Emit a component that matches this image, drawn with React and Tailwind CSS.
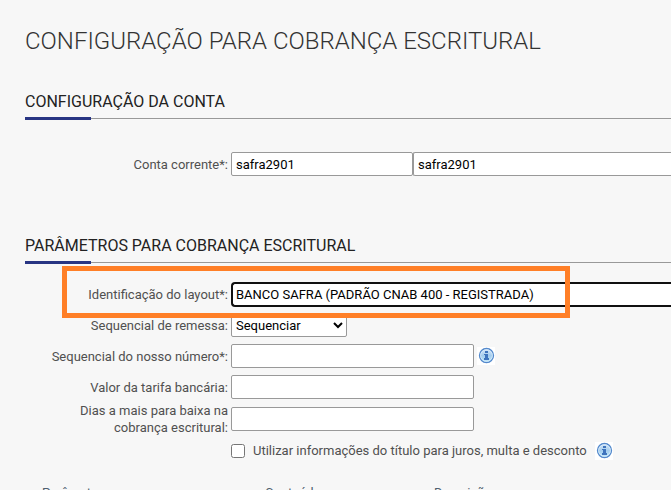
import React, { useState } from 'react';

const fieldClass =
  'h-6 rounded-xs border border-[#999999] bg-white px-1 text-[13px] text-black focus:outline-none';

const InfoIcon = () => (
  <svg viewBox="0 0 18 18" className="h-[18px] w-[18px] bg-white" aria-hidden="true">
    <defs>
      <linearGradient id="info-fill" x1="0" y1="0" x2="0" y2="1">
        <stop offset="0" stopColor="#dbe9f8" />
        <stop offset="0.5" stopColor="#a5cdee" />
        <stop offset="1" stopColor="#bdeafa" />
      </linearGradient>
    </defs>
    <circle cx="9.5" cy="8.5" r="7" fill="url(#info-fill)" stroke="#5489cc" strokeWidth="1.3" />
    <circle cx="9.5" cy="8.5" r="5.9" fill="none" stroke="#dcedfb" strokeWidth="0.8" />
    <path d="M8 4h3v2H8z M7 7h4v4h1v2H7v-2h1V8H7z" fill="#3f74bd" />
  </svg>
);

const SectionTitle = ({ children }) => (
  <div className="ml-[25px] border-b border-[#999999]">
    <h2 className="h-[27px] text-base leading-6 text-[#222222]">{children}</h2>
    <div className="-mb-0.5 h-[3px] w-[66px] bg-[#283583]" />
  </div>
);

const FormRow = ({ label, htmlFor, children }) => (
  <div className="flex items-center gap-[3px] pl-[25px]">
    <label htmlFor={htmlFor} className="w-[203px] shrink-0 text-right leading-[17px]">
      {`${label}:`}
    </label>
    {children}
  </div>
);

const InfoButton = ({ title }) => (
  <button type="button" aria-label={title} className="shrink-0">
    <InfoIcon />
  </button>
);

const App = () => {
  const [account, setAccount] = useState('safra2901');
  const [accountName, setAccountName] = useState('safra2901');
  const [useTitleInfo, setUseTitleInfo] = useState(false);

  return (
    <main className="h-screen overflow-hidden bg-[#f7f7f7] font-['Roboto',sans-serif] text-[13px] text-[#505050]">
      <h1 className="pt-[25px] pl-[25px] text-2xl leading-8 font-light text-[#333333]">
        CONFIGURAÇÃO PARA COBRANÇA ESCRITURAL
      </h1>

      <form>
        <section className="pt-[33px]">
          <SectionTitle>CONFIGURAÇÃO DA CONTA</SectionTitle>
          <div className="pt-[33px]">
            <FormRow label="Conta corrente*" htmlFor="account">
              <div className="flex min-w-0 flex-1">
                <input
                  id="account"
                  type="text"
                  className={`${fieldClass} w-[182px]`}
                  value={account}
                  onChange={(e) => setAccount(e.target.value)}
                />
                <input
                  type="text"
                  aria-label="Conta corrente"
                  className={`${fieldClass} min-w-0 flex-1 rounded-r-none border-r-0`}
                  value={accountName}
                  onChange={(e) => setAccountName(e.target.value)}
                />
              </div>
            </FormRow>
          </div>
        </section>

        <section className="pt-[58px]">
          <SectionTitle>PARÂMETROS PARA COBRANÇA ESCRITURAL</SectionTitle>
          <div className="flex flex-col gap-[7px] pt-[19px]">
            <div className="relative -mb-px">
              <FormRow label="Identificação do layout*" htmlFor="layout">
                <select
                  id="layout"
                  className="h-[25px] min-w-0 flex-1 appearance-none rounded-l-sm border-2 border-r-0 border-[#101010] bg-white px-[3px] text-[13px] text-black outline-none"
                >
                  <option>BANCO SAFRA (PADRÃO CNAB 400 - REGISTRADA)</option>
                </select>
              </FormRow>
              {/* highlight around the layout field */}
              <div className="pointer-events-none absolute -top-4 left-[62px] z-10 h-[52px] w-[508px] border-5 border-[#ff7f27]" />
            </div>

            <FormRow label="Sequencial de remessa" htmlFor="sequence">
              <select
                id="sequence"
                className="h-6 w-[116px] rounded-xs border border-[#999999] bg-white text-[13px] text-black"
              >
                <option>Sequenciar</option>
              </select>
            </FormRow>

            <FormRow label="Sequencial do nosso número*" htmlFor="number">
              <input id="number" type="text" className={`${fieldClass} w-[243px]`} />
              <InfoButton title="Sequencial do nosso número" />
            </FormRow>

            <FormRow label="Valor da tarifa bancária" htmlFor="fee">
              <input id="fee" type="text" className={`${fieldClass} w-[243px]`} />
            </FormRow>

            <div className="-mt-1">
              <FormRow label="Dias a mais para baixa na cobrança escritural" htmlFor="days">
                <input id="days" type="text" className={`${fieldClass} w-[243px]`} />
              </FormRow>
            </div>
          </div>

          <div className="flex items-center gap-2 pt-[5px] pl-[231px]">
            <label className="flex items-center gap-2">
              <input
                type="checkbox"
                className="h-3.5 w-3.5"
                checked={useTitleInfo}
                onChange={(e) => setUseTitleInfo(e.target.checked)}
              />
              Utilizar informações do título para juros, multa e desconto
            </label>
            <InfoButton title="Utilizar informações do título" />
          </div>
        </section>

        <table className="mt-[22px] ml-[42px] w-[650px] table-fixed text-left text-[#4f5f6f]">
          <thead>
            <tr>
              <th className="w-[223px] font-normal">Parâmetro</th>
              <th className="w-[169px] font-normal">Conteúdo</th>
              <th className="font-normal">Descrição</th>
            </tr>
          </thead>
        </table>
      </form>
    </main>
  );
};

export default App;
